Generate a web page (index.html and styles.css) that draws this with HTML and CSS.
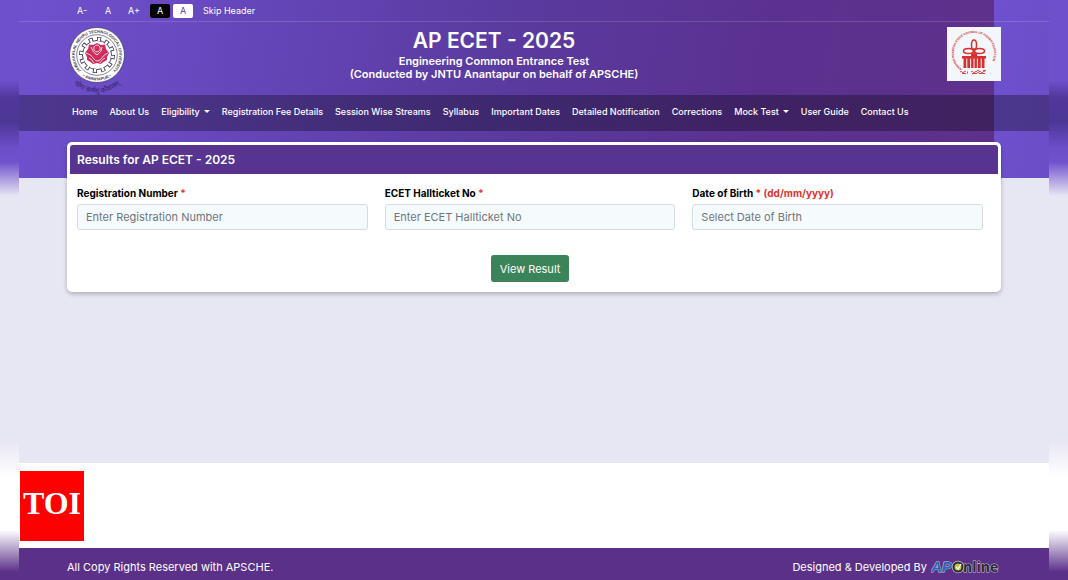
FILE: index.html
```
<!DOCTYPE html>
<html lang="en">
<head>
    <meta charset="UTF-8">
    <meta name="viewport" content="width=device-width, initial-scale=1.0">
    <title>AP ECET - 2025</title>
    <link rel="stylesheet" href="styles.css">
</head>
<body>
    <div class="page">
        <div class="topbar">
            <div class="container topbar-inner">
                <button type="button">A-</button>
                <button type="button">A</button>
                <button type="button">A+</button>
                <button type="button" class="dark">A</button>
                <button type="button" class="light">A</button>
                <a href="#results">Skip Header</a>
            </div>
        </div>

        <header class="container header">
            <svg class="jntu-logo" viewBox="0 0 60 68" role="img" aria-label="JNTU Anantapur">
                <defs>
                    <path id="ringTop" d="M14.200 43.800 A22.300 22.300 0 1 1 45.800 43.800"/>
                    <path id="ringBottom" d="M11 45 A25.500 25.500 0 0 0 49 45"/>
                    <path id="motto" d="M1 52 Q30 80 59 52"/>
                </defs>
                <circle cx="30" cy="28" r="27.5" fill="#fff" stroke="#39334f" stroke-width="0.7"/>
                <text class="ring-text" text-anchor="middle"><textPath href="#ringTop" startOffset="50%">JAWAHARLAL NEHRU TECHNOLOGICAL UNIVERSITY</textPath></text>
                <text class="ring-text" text-anchor="middle"><textPath href="#ringBottom" startOffset="50%">• ANANTAPUR •</textPath></text>
                <circle cx="30" cy="28" r="20.3" fill="none" stroke="#39334f" stroke-width="0.6"/>
                <!-- gear: 12 teeth around the inner disc -->
                <circle cx="30" cy="28" r="14.6" fill="#fff" stroke="#39334f" stroke-width="0.9"/>
                <circle cx="30" cy="28" r="16" fill="none" stroke="#39334f" stroke-width="4" pathLength="48" stroke-dasharray="2 2"/>
                <circle cx="30" cy="28" r="15.500" fill="none" stroke="#fff" stroke-width="3.600" pathLength="48" stroke-dasharray="1.200 2.800" stroke-dashoffset="-0.400"/>
                <path fill="#d12d5c" d="M30 16 L34 18 L38 17.500 L39 22 L42 26 L40 30 L40 33 L36.500 35 L34 37 L30 36 L26 37 L23.500 35 L20 33 L20 30 L18 26 L21 22 L22 17.500 L26 18 Z"/>
                <path fill="none" stroke="#fff" stroke-width="0.8" d="M24 20 Q26 26 30 28 Q35 25 35 20 M27 20 Q30 16 33 20 Q34 24 30 25 Q26 24 27 20 M19 26 Q24 27 27 32 Q30 36 34 32 Q37 27 41 26 M22 31 Q25 32 27 36 M38 31 Q35 32 33 36"/>
                <text class="motto-text" text-anchor="middle"><textPath href="#motto" startOffset="50%">योगः कर्मसु कौशलम्</textPath></text>
            </svg>

            <div class="title">
                <h1>AP ECET - 2025</h1>
                <p>Engineering Common Entrance Test</p>
                <p>(Conducted by JNTU Anantapur on behalf of APSCHE)</p>
            </div>

            <svg class="apsche-logo" viewBox="0 0 54 54" role="img" aria-label="APSCHE">
                <defs>
                    <path id="arch" d="M15 42 A20 20 0 1 1 39 42"/>
                </defs>
                <rect width="54" height="54" fill="#f3f7fb"/>
                <text class="arch-text"><textPath href="#arch">ANDHRA PRADESH STATE COUNCIL OF HIGHER EDUCATION</textPath></text>
                <g fill="none" stroke="#d8302f" stroke-width="1.5">
                    <ellipse cx="27" cy="18" rx="2.500" ry="5"/>
                    <ellipse cx="21.500" cy="24" rx="5" ry="2.500"/>
                    <ellipse cx="32.500" cy="24" rx="5" ry="2.500"/>
                    <path d="M27 21 V30 M24 27 H30"/>
                </g>
                <path fill="#d8302f" d="M15 29 H24 V27 H30 V29 H39 V31.500 H37.500 V41 H34.700 V31.500 H33.700 V41 H30.900 V31.500 H29.900 V41 H27.500 V31.500 H26.500 V41 H24.100 V31.500 H23.100 V41 H20.300 V31.500 H19.300 V41 H16.500 V31.500 H15 Z"/>
                <path fill="none" stroke="#d8302f" stroke-width="0.9" d="M13 45 q1.500-1.500 2 0 t2 0 t2 0 M15 46.500 h4 M20.500 44.500 v2 M24 45 q1.500-1.500 2 0 t2 0 t2 0 t2 0 t2 0 t2 0 t2 0 M25 46.500 h5 M32 46.500 h6 M30 43.500 h2 M36 43.500 h3"/>
            </svg>
        </header>

        <nav class="navbar">
            <div class="container nav-links">
                <a href="#">Home</a>
                <a href="#">About Us</a>
                <a href="#" class="dropdown">Eligibility</a>
                <a href="#">Registration Fee Details</a>
                <a href="#">Session Wise Streams</a>
                <a href="#">Syllabus</a>
                <a href="#">Important Dates</a>
                <a href="#">Detailed Notification</a>
                <a href="#">Corrections</a>
                <a href="#" class="dropdown">Mock Test</a>
                <a href="#">User Guide</a>
                <a href="#">Contact Us</a>
            </div>
        </nav>

        <main class="container results" id="results">
            <form class="card">
                <h2>Results for AP ECET - 2025</h2>
                <div class="card-body">
                    <div class="fields">
                        <div class="field">
                            <label for="regNo">Registration Number <span>*</span></label>
                            <input type="text" id="regNo" placeholder="Enter Registration Number">
                        </div>
                        <div class="field">
                            <label for="hallticket">ECET Hallticket No <span>*</span></label>
                            <input type="text" id="hallticket" placeholder="Enter ECET Hallticket No">
                        </div>
                        <div class="field">
                            <label for="dob">Date of Birth <span>* (dd/mm/yyyy)</span></label>
                            <input type="text" id="dob" placeholder="Select Date of Birth">
                        </div>
                    </div>
                    <button type="button" class="view-btn">View Result</button>
                </div>
            </form>
        </main>

        <div class="strip">
            <div class="toi">TOI</div>
        </div>

        <footer>
            <div class="container footer-inner">
                <span>All Copy Rights Reserved with APSCHE.</span>
                <div class="credit">
                    <span>Designed &amp; Developed By</span>
                    <svg class="aponline" viewBox="0 0 70 18" role="img" aria-label="APOnline">
                        <text class="brand-ap" x="0" y="14">AP</text>
                        <text class="brand-line" x="32" y="14">nline</text>
                        <circle cx="27" cy="9" r="4.500" fill="#b4c83c" stroke="#c8c4cf" stroke-width="3.500"/>
                        <circle cx="27" cy="9" r="4.500" fill="#b4c83c" stroke="#2c2838" stroke-width="2"/>
                        <path d="M25 9 L27 11 L30 6" fill="none" stroke="#fff" stroke-width="1.200"/>
                    </svg>
                </div>
            </div>
        </footer>
    </div>
</body>
</html>
```

FILE: styles.css
```
* {
    box-sizing: border-box;
}

body {
    font-family: Inter, "Liberation Sans", sans-serif;
    margin: 0;
    padding: 0 19px;
    background: linear-gradient(#6e50cd 0, #6e50cd 80px, #50379a 98px, #4d3796 122px, #6c4ecb 148px, #7152cd 162px, #e7e6f3 196px, #e7e6f3 440px, #fff 478px, #fff 530px, #5b3088 572px);
}

h1, h2, p {
    margin: 0;
}

a {
    color: inherit;
    text-decoration: none;
}

button, input {
    font-family: inherit;
}

.page {
    min-height: 100vh;
    display: flex;
    flex-direction: column;
    background-color: #e7e6f3;
    background-image: linear-gradient(100deg, #6f51cf 0%, #6748bd 20%, #5a3ba0 48%, #5b3190 75%, #5d318b 100%);
    background-size: calc(100% - 55px) 178px;
    background-repeat: repeat-x;
}

.container {
    width: 100%;
    padding: 0 48px;
}

.topbar {
    border-bottom: 1px solid rgba(255, 255, 255, 0.15);
    color: #fff;
    font-size: 9px;
}

.topbar-inner {
    height: 21px;
    display: flex;
    align-items: center;
}

.topbar button {
    background: none;
    border: none;
    border-radius: 2px;
    color: #fff;
    font-size: 9px;
    padding: 0;
    width: 20px;
    height: 14px;
    margin-right: 6px;
    cursor: pointer;
}

.topbar button:first-child {
    margin-left: 5px;
}

.topbar .dark {
    background-color: #000;
    margin-right: 3px;
}

.topbar .light {
    background-color: #fff;
    color: #5b3b9d;
    margin-right: 10px;
}

.header {
    height: 73px;
    display: grid;
    grid-template-columns: 60px 1fr 140px;
    padding-top: 5px;
}

.jntu-logo {
    width: 60px;
    height: 68px;
}

.ring-text {
    font: 700 4px "Liberation Sans", sans-serif;
    fill: #39334f;
}

.motto-text {
    font: 400 7px "Noto Sans", sans-serif;
    fill: #35265f;
}

.title {
    color: #fff;
    text-align: center;
    font-size: 11px;
    font-weight: 600;
    line-height: 13px;
}

.title h1 {
    font-size: 21px;
    line-height: 28px;
    font-weight: 600;
}

.apsche-logo {
    width: 54px;
    height: 54px;
    justify-self: end;
}

.arch-text {
    font: 700 3px Inter, sans-serif;
    fill: #d8302f;
}

.navbar {
    background-color: rgba(0, 0, 0, 0.3);
    color: #fff;
}

.nav-links {
    min-height: 36px;
    padding-bottom: 4px;
    display: flex;
    align-items: center;
    gap: 12px;
    font-size: 9px;
    font-weight: 500;
    white-space: nowrap;
}

.nav-links a:first-child {
    margin-left: 5px;
}

.dropdown::after {
    content: "";
    display: inline-block;
    margin-left: 4px;
    vertical-align: 2px;
    border-top: 3px solid #fff;
    border-left: 3px solid transparent;
    border-right: 3px solid transparent;
}

.results {
    flex: 1;
    padding-top: 11px;
    padding-bottom: 20px;
}

.card {
    border: 3px solid #fff;
    border-radius: 5px;
    background-color: #fff;
    box-shadow: 0 2px 4px rgba(0, 0, 0, 0.25);
}

.card h2 {
    background: linear-gradient(#5a348c, #553594 50%, #5a328d);
    border-radius: 3px 3px 0 0;
    color: #fff;
    font-size: 12px;
    font-weight: 600;
    line-height: 29px;
    padding-left: 7px;
}

.card-body {
    padding: 12px 15px 7px 7px;
    text-align: center;
}

.fields {
    display: grid;
    grid-template-columns: repeat(3, 1fr);
    gap: 17px;
    text-align: left;
}

.field label {
    display: block;
    font-size: 10px;
    font-weight: 700;
    line-height: 14px;
    margin-bottom: 4px;
    color: #000;
}

.field span {
    color: #dc3530;
}

.field input {
    display: block;
    width: 100%;
    height: 26px;
    padding: 0 8px;
    border: 1px solid #d5dde2;
    border-radius: 3px;
    background-color: #f5fafd;
    font-size: 11px;
}

.field input::placeholder {
    color: #6f777d;
}

.view-btn {
    margin-top: 25px;
    height: 27px;
    padding: 0 9px;
    border: none;
    border-radius: 3px;
    background-color: #3b8459;
    color: #fff;
    font-size: 11px;
    cursor: pointer;
}

.view-btn:hover {
    background-color: #2f6d49;
}

.strip {
    background-color: #fff;
    padding: 8px 1px 7px;
}

.toi {
    width: 64px;
    height: 70px;
    background-color: #fe0000;
    color: #fff;
    font: 700 32px/64px "Liberation Serif", serif;
    text-align: center;
}

footer {
    background-color: #5b3088;
    color: #fff;
    font-size: 11px;
}

.footer-inner {
    min-height: 32px;
    padding-top: 6px;
    display: flex;
    justify-content: space-between;
    align-items: center;
}

.credit {
    display: flex;
    align-items: center;
    gap: 4px;
}

.aponline {
    width: 70px;
    height: 18px;
}

.brand-ap, .brand-line {
    font: italic 700 15px "Liberation Sans", sans-serif;
    stroke: #c8c4cf;
    stroke-width: 1px;
    paint-order: stroke;
}

.brand-ap {
    fill: #2866b8;
}

.brand-line {
    font: 700 14px "Open Sans", sans-serif;
    fill: #2c2838;
}
```
